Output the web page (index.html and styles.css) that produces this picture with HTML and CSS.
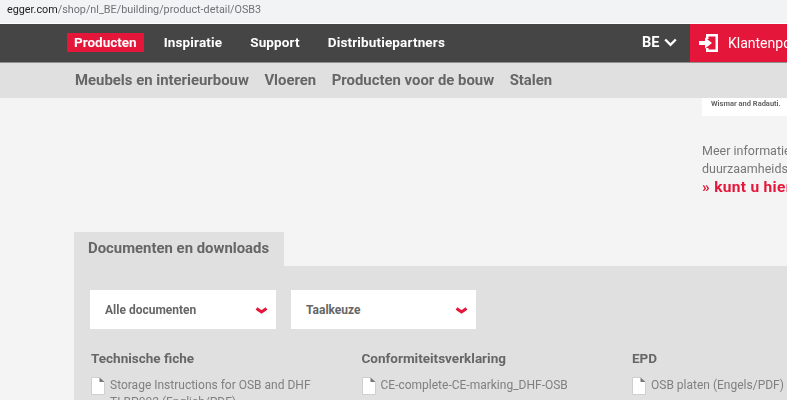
FILE: index.html
```html
<!DOCTYPE html>
<html lang="nl">
<head>
<meta charset="utf-8">
<title>OSB3</title>
<link rel="stylesheet" href="styles.css">
</head>
<body>
<div class="page">
  <div class="urlbar"><span class="host">egger.com</span>/shop/nl_BE/building/product-detail/OSB3</div>
  <header class="topnav">
    <nav class="mainlinks">
      <a class="mainlink active">Producten</a>
      <a class="mainlink">Inspiratie</a>
      <a class="mainlink">Support</a>
      <a class="mainlink">Distributiepartners</a>
    </nav>
    <div class="lang">BE
      <svg class="lang-chev" width="13" height="9" viewBox="0 0 13 9"><path d="M1.200 1.500 6.500 6.800 11.800 1.500" fill="none" stroke="#fff" stroke-width="2.400"/></svg>
    </div>
    <div class="portal">
      <svg class="portal-icon" width="19" height="18" viewBox="0 0 19 18"><path d="M7 0h12v18H7v-4h2.500v1.500h7v-13h-7V5H7z" fill="#fff"/><path d="M0 7h6V3.500L13 9l-7 5.500V11H0z" fill="#fff"/></svg>
      <span class="portal-text">Klantenportaal</span>
    </div>
  </header>
  <nav class="subnav">
    <a>Meubels en interieurbouw</a>
    <a>Vloeren</a>
    <a>Producten voor de bouw</a>
    <a>Stalen</a>
  </nav>
  <aside class="aside">
    <div class="aside-card">Wismar and Radauti.</div>
    <p class="aside-text">Meer informatie over onze<br>duurzaamheidsinspanningen<br><a class="aside-link">» kunt u hier vinden</a></p>
  </aside>
  <section class="docs">
    <div class="tab">Documenten en downloads</div>
    <div class="panel">
      <div class="filters">
        <div class="select">Alle documenten
          <svg class="select-chev" width="13" height="8" viewBox="0 0 13 8"><path d="M1.500 1.500 6.500 5 11.500 1.500" fill="none" stroke="#e4173a" stroke-width="3"/></svg>
        </div>
        <div class="select select-narrow">Taalkeuze
          <svg class="select-chev" width="13" height="8" viewBox="0 0 13 8"><path d="M1.500 1.500 6.500 5 11.500 1.500" fill="none" stroke="#e4173a" stroke-width="3"/></svg>
        </div>
      </div>
      <div class="columns">
        <div class="col col-a">
          <h3>Technische fiche</h3>
          <div class="doc">
            <svg class="doc-icon" width="14" height="18" viewBox="0 0 14 18"><path d="M.5.500h8l5 5v12H.5z" fill="#fff" stroke="#cfcfcf"/><path d="M8.500.500v4.500h5z" fill="#777"/></svg>
            <span>Storage Instructions for OSB and DHF<br>TLBP002 (English/PDF)</span>
          </div>
        </div>
        <div class="col col-b">
          <h3>Conformiteitsverklaring</h3>
          <div class="doc">
            <svg class="doc-icon" width="14" height="18" viewBox="0 0 14 18"><path d="M.5.500h8l5 5v12H.5z" fill="#fff" stroke="#cfcfcf"/><path d="M8.500.500v4.500h5z" fill="#777"/></svg>
            <span>CE-complete-CE-marking_DHF-OSB</span>
          </div>
        </div>
        <div class="col">
          <h3>EPD</h3>
          <div class="doc">
            <svg class="doc-icon" width="14" height="18" viewBox="0 0 14 18"><path d="M.5.500h8l5 5v12H.5z" fill="#fff" stroke="#cfcfcf"/><path d="M8.500.500v4.500h5z" fill="#777"/></svg>
            <span>OSB platen (Engels/PDF)</span>
          </div>
        </div>
      </div>
    </div>
  </section>
</div>
</body>
</html>
```
FILE: styles.css
```css
* { box-sizing: border-box; }
html, body { margin: 0; padding: 0; }
body { width: 787px; height: 400px; overflow: hidden; background: #f4f4f4; font-family: Roboto, "Noto Sans", sans-serif; }
.page { width: 787px; height: 400px; overflow: hidden; filter: blur(0.35px); }

.urlbar { height: 24px; background: #f1f3f4; border-bottom: 1px solid #fff; padding-left: 7px; font: 10.800px/19px Roboto, sans-serif; color: #6f7275; white-space: nowrap; }
.host { color: #222; }

.topnav { height: 39px; background: #454545; border-bottom: 1px solid #8f8f8f; display: flex; align-items: stretch; color: #fff; }
.mainlinks { display: flex; align-items: center; gap: 28px; padding: 0 0 1px 67px; width: 642px; font-weight: 700; font-size: 13.500px; }
.mainlink { display: block; height: 19px; line-height: 18px; white-space: nowrap; letter-spacing: 0.15px; }
.mainlink.active { background: #e4173a; padding: 0 7px; margin-right: -8px; letter-spacing: 0; }
.lang { width: 48px; display: flex; align-items: center; gap: 5px; padding-bottom: 1px; font-weight: 700; font-size: 14.500px; }
.portal { flex: 1; background: #e4173a; display: flex; align-items: center; padding: 0 0 1px 9px; gap: 10px; overflow: hidden; white-space: nowrap; font-size: 14px; }
.portal-icon, .portal-text { flex: none; }

.subnav { height: 35px; background: #e0e0e0; display: flex; align-items: center; gap: 15.500px; padding: 0 0 1px 75px; font-weight: 700; font-size: 14.900px; color: #666; white-space: nowrap; }

.aside { margin-left: 702px; height: 134px; white-space: nowrap; }
.aside-card { height: 18px; width: 85px; background: #fff; padding-left: 9px; font-size: 7.500px; font-weight: 700; color: #666; line-height: 12px; }
.aside-text { margin: 26px 0 0; font-size: 12.500px; line-height: 18px; color: #777; }
.aside-link { color: #e4173a; font-weight: 700; font-size: 15.500px; letter-spacing: 0.3px; }

.docs { margin-left: 74px; }
.tab { width: 210px; height: 34px; background: #e0e0e0; padding-left: 14px; font-weight: 700; font-size: 14.900px; line-height: 33px; color: #666; white-space: nowrap; }
.panel { background: #e0e0e0; height: 140px; padding: 24px 0 0 16px; width: 713px; }
.filters { display: flex; gap: 15px; }
.select { width: 186px; height: 39px; background: #fff; display: flex; align-items: center; justify-content: space-between; padding: 0 8px 0 15px; font-weight: 700; font-size: 12px; color: #666; }
.select-narrow { width: 185px; }
.select-chev { margin-top: 3px; }
.columns { display: flex; margin-top: 20px; padding-left: 1px; white-space: nowrap; }
.col { flex: none; }
.col-a { width: 270.500px; }
.col-b { width: 270.500px; }
.col h3 { margin: 0 0 10px; font-size: 13.500px; line-height: 18px; font-weight: 700; color: #666; }
.doc { display: flex; gap: 5px; font-size: 12px; line-height: 17px; color: #808080; }
.doc-icon { flex: none; }
```
